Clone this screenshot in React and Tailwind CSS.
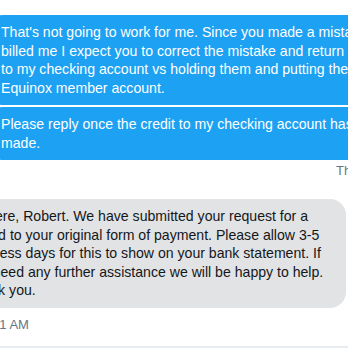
import React from "react";

const sentLines = [
  [
    "That's not going to work for me. Since you made a mistake and",
    "billed me I expect you to correct the mistake and return the funds",
    "to my checking account vs holding them and putting them on my",
    "Equinox member account.",
  ],
  ["Please reply once the credit to my checking account has been", "made."],
];

const receivedLines = [
  "Hi there, Robert. We have submitted your request for a",
  "refund to your original form of payment. Please allow 3-5",
  "business days for this to show on your bank statement. If",
  "you need any further assistance we will be happy to help.",
  "Thank you.",
];

const App = () => {
  return (
    <div
      className="w-[348px] h-[348px] overflow-hidden bg-white flex flex-col"
      style={{ fontFamily: '"Liberation Sans", Arial, sans-serif' }}
    >
      {/* Sent messages */}
      <div className="mt-[15px] ml-[-13px] w-[430px] flex flex-col gap-[2px]">
        {sentLines.map((lines, i) => (
          <div
            key={i}
            className="bg-[#1da1f2] text-white text-[14.1px] leading-[18.5px] px-[14px] py-2 rounded-l-2xl"
          >
            {lines.map((line) => (
              <div key={line} className="whitespace-nowrap">
                {line}
              </div>
            ))}
          </div>
        ))}
      </div>
      <div className="ml-[-13px] w-[430px] flex justify-end mt-[3px]">
        <span className="text-[13px] leading-4 text-[#657786] whitespace-nowrap">
          Thu 10:41 AM
        </span>
      </div>

      {/* Received message */}
      <div className="mt-[20px] ml-[-50px] w-[396px] bg-[#e2e3e5] rounded-r-2xl rounded-bl-sm text-[#14171a] text-[14.1px] leading-[18.5px] pl-[16px] pr-[14px] py-2">
        {receivedLines.map((line) => (
          <div key={line} className="whitespace-nowrap">
            {line}
          </div>
        ))}
      </div>
      <div className="ml-[-26px] mt-[4px]">
        <span className="text-[13px] leading-4 text-[#657786] whitespace-nowrap">
          10:41 AM
        </span>
      </div>

      {/* Composer border */}
      <div className="mt-auto h-[2px] bg-[#e6ecf0]" />
    </div>
  );
};

export default App;
